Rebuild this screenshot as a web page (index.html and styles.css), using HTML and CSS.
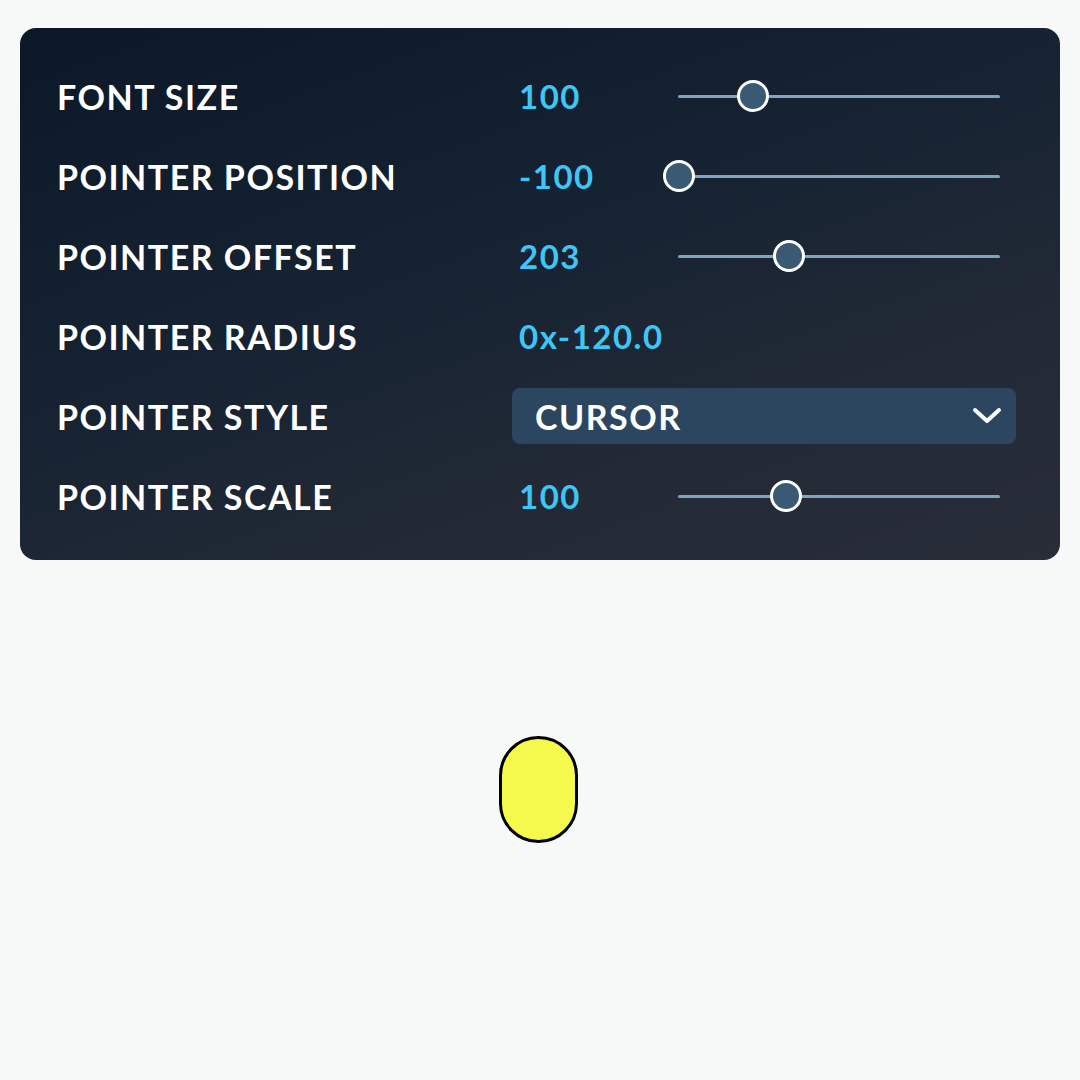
FILE: index.html
```html
<!DOCTYPE html>
<html lang="en">
<head>
<meta charset="utf-8">
<title>Pointer settings</title>
<link rel="stylesheet" href="styles.css">
</head>
<body>
<div class="panel">
  <div class="label">FONT SIZE</div>
  <div class="value">100</div>
  <div class="slider"><div class="track"><span class="thumb" style="left:23.3%"></span></div></div>

  <div class="label">POINTER POSITION</div>
  <div class="value">-100</div>
  <div class="slider"><div class="track"><span class="thumb" style="left:0.3%"></span></div></div>

  <div class="label">POINTER OFFSET</div>
  <div class="value">203</div>
  <div class="slider"><div class="track"><span class="thumb" style="left:34.5%"></span></div></div>

  <div class="label">POINTER RADIUS</div>
  <div class="value wide">0x-120.0</div>

  <div class="label">POINTER STYLE</div>
  <div class="select">
    <span>CURSOR</span>
    <svg class="chev" width="30" height="18" viewBox="0 0 30 18"><path d="M3 3 L15 14 L27 3" fill="none" stroke="#ffffff" stroke-width="4" stroke-linecap="round" stroke-linejoin="round"/></svg>
  </div>

  <div class="label">POINTER SCALE</div>
  <div class="value">100</div>
  <div class="slider"><div class="track"><span class="thumb" style="left:33.5%"></span></div></div>
</div>
<div class="stage">
  <div class="pointer"></div>
</div>
</body>
</html>
```
FILE: styles.css
```css
html, body {
  margin: 0;
  padding: 0;
  background: #f7f8f8;
  width: 1080px;
  height: 1080px;
  overflow: hidden;
  font-family: "Lato", "DejaVu Sans", sans-serif;
}

.panel {
  margin: 28px 20px 0 20px;
  width: 1040px;
  height: 532px;
  box-sizing: border-box;
  border-radius: 16px;
  background: linear-gradient(160deg, #0a1828 0%, #152232 40%, #232a36 75%, #282d38 100%);
  padding: 40px 44px 0 37px;
  display: grid;
  grid-template-columns: 455px 166px 338px;
  grid-auto-rows: 56px;
  row-gap: 24px;
  align-items: center;
}

.label {
  grid-column: 1;
  color: #ffffff;
  font-weight: 700;
  font-size: 34px;
  letter-spacing: 1.5px;
  white-space: nowrap;
}

.value {
  grid-column: 2;
  color: #3ec6f6;
  font-weight: 700;
  font-size: 33px;
  letter-spacing: 1.5px;
  padding-left: 7px;
  white-space: nowrap;
}

.value.wide {
  grid-column: 2 / 4;
}

.slider {
  grid-column: 3;
  padding-right: 16px;
  height: 56px;
  display: flex;
  align-items: center;
}

.track {
  position: relative;
  width: 100%;
  height: 3px;
  border-radius: 2px;
  background: #7fa4bd;
}

.thumb {
  position: absolute;
  top: 50%;
  width: 26px;
  height: 26px;
  border: 3px solid #ffffff;
  border-radius: 50%;
  background: #3a5a73;
  transform: translate(-50%, -50%);
}

.select {
  grid-column: 2 / 4;
  height: 56px;
  border-radius: 8px;
  background: #2d4660;
  display: flex;
  align-items: center;
  justify-content: space-between;
  padding: 0 14px 0 23px;
  color: #ffffff;
  font-weight: 700;
  font-size: 34px;
  letter-spacing: 1.5px;
}

.chev {
  display: block;
}

.stage {
  display: flex;
  justify-content: center;
  padding-top: 176px;
  padding-right: 4px;
}

.pointer {
  width: 73px;
  height: 101px;
  border: 3.5px solid #000000;
  border-radius: 40px;
  background: #f5f94b;
}
```
